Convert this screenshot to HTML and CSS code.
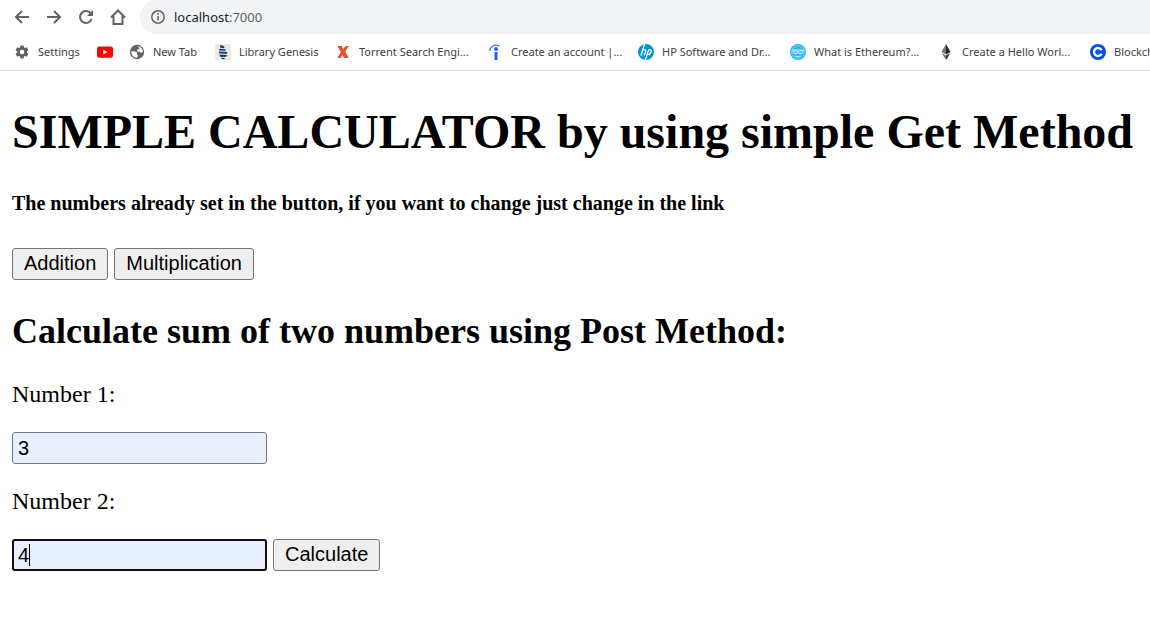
FILE: index.html
```html
<!DOCTYPE html>
<html lang="en">
<head>
<meta charset="utf-8">
<title>Simple Calculator</title>
<link rel="stylesheet" href="styles.css">
</head>
<body>
<header class="browser">
  <div class="toolbar">
    <button class="nav" type="button" aria-label="Back"><svg viewBox="0 0 16 16"><path d="M15 8H2M8 2L2 8l6 6" class="line"/></svg></button>
    <button class="nav" type="button" aria-label="Forward"><svg viewBox="0 0 16 16"><path d="M1 8h13M8 2l6 6-6 6" class="line"/></svg></button>
    <button class="nav" type="button" aria-label="Reload"><svg viewBox="0 0 16 16"><path d="M12.800 4.300A6 6 0 1 0 13.700 10" class="line"/><path d="M15 1v6H9z" fill="#5f6368"/></svg></button>
    <button class="nav" type="button" aria-label="Home"><svg viewBox="0 0 16 16"><path d="M1 8.500L8 1.500l7 7M3.500 7v8h9V7" class="line"/></svg></button>
    <div class="address">
      <svg class="info" viewBox="0 0 16 16"><circle cx="8" cy="8" r="6.200" class="line"/><path d="M8 7v4.500M8 4v1.800" class="line"/></svg>
      <span>localhost<span class="port">:7000</span></span>
    </div>
  </div>
  <nav class="bookmarks" aria-label="Bookmarks">
    <a class="mark" href="#"><svg viewBox="0 0 16 16"><g fill="#5f6368"><circle cx="8" cy="8" r="5"/><path d="M6.400 1.500h3.200l.5 3H5.900zM6.400 14.500h3.200l.5-3H5.900z"/><path d="M6.400 1.500h3.200l.5 3H5.900zM6.400 14.500h3.200l.5-3H5.900z" transform="rotate(60 8 8)"/><path d="M6.400 1.500h3.200l.5 3H5.900zM6.400 14.500h3.200l.5-3H5.900z" transform="rotate(120 8 8)"/></g><circle cx="8" cy="8" r="2.200" fill="#fff"/></svg><span class="label tiny">Settings</span></a>
    <a class="mark" href="#" aria-label="YouTube"><svg viewBox="0 0 16 16"><rect y="2.400" width="16" height="11.400" rx="2.500" fill="#f00"/><path d="M6.300 5.700v4.800l4.200-2.400z" fill="#fff"/></svg></a>
    <a class="mark" href="#"><svg viewBox="0 0 16 16"><circle cx="8" cy="8" r="7.200" fill="#5f6368"/><path d="M2.200 7.500c1.500-.3 3 0 4.300.2 1.500.3 1.800 1 1.500 1.800-.2.700.1 1.200 1 1.500l-.8 2.700C5 13.800 2 11.200 2.200 7.500zM8.500 2.200c3 .1 5.500 2.800 5.400 5.800-.7 1-1.700 1-2.500.4-.8-.7-1.700-.4-2.600-.7-1-.4-1.200-1.400-.5-2 .6-.5 1.700-.4 2-1.200.2-.7-.8-1.100-1.800-2.300z" fill="#fff"/></svg><span class="label tiny wide">New Tab</span></a>
    <a class="mark" href="#"><svg viewBox="0 0 16 16"><path fill="#ebebdf" d="M0 0h16v16H0z"/><path d="M5 1.500c2-.8 3.500 0 4.500 1.700L9 4.200 5.200 3.800zM4.500 4.800l6 .4.500 1.600-7-.4zM4 7.500l8.500.4-1 2L3.800 9.200zM4.500 10.600l6.500.4 1.700 1-3 1-4.700-.3zM6 13.800l4 .2-1 1.300H7z" fill="#173b83"/></svg><span class="label short">Library Genesis</span></a>
    <a class="mark" href="#"><svg viewBox="0 0 16 16"><path d="M2.300 2h4.200l1.900 3L10.400 2h3.300l-3.500 5.500L13.800 14H9.300L7.500 11 5.500 14H2.300L5.900 8z" fill="#e7512b"/></svg><span class="label">Torrent Search Engi...</span></a>
    <a class="mark" href="#"><svg viewBox="0 0 16 16"><path d="M2.700 7C3 2.700 7.500-.4 12.500 2.200" fill="none" stroke="#3977ef" stroke-width="1.300"/><circle cx="9" cy="4.900" r="2" fill="#215cec"/><path d="M7.500 8h3v8h-3z" fill="#215cec"/></svg><span class="label account">Create an account |...</span></a>
    <a class="mark" href="#"><svg viewBox="0 0 16 16"><circle cx="8" cy="8" r="8" fill="#0096d6"/><path d="M6.500 0L3 11.500M4.500 6c2.500-.3 3.800-.2 3.100 1.800L6.200 11.500M7.300 16L10.700 6M10.400 6c3-.3 3.300.2 2.500 2.400-.7 2-1.300 2.500-4 2.500" fill="none" stroke="#fff" stroke-width="1.300"/></svg><span class="label">HP Software and Dr...</span></a>
    <a class="mark" href="#"><svg viewBox="0 0 16 16"><circle cx="8" cy="8" r="8" fill="#29b6f6"/><circle cx="8" cy="8" r="6.300" fill="none" stroke="#87d8fb" stroke-width=".8"/><path d="M1.500 6h13M3 7h4.300v2.500H4zM8.700 7H13l-1 2.500H8.700zM5 12q3 1.300 6 0" fill="none" stroke="#c4ecfd"/></svg><span class="label mid">What is Ethereum?...</span></a>
    <a class="mark" href="#"><svg viewBox="0 0 16 16"><path d="M8 0L3.500 8 8 10.500z" fill="#777"/><path d="M8 0l4.500 8L8 10.500z" fill="#292929"/><path d="M3.500 9L8 11.500V16z" fill="#777"/><path d="M12.500 9L8 11.500V16z" fill="#333"/></svg><span class="label">Create a Hello Worl...</span></a>
    <a class="mark" href="#"><svg viewBox="0 0 16 16"><circle cx="8" cy="8" r="8" fill="#0052e0"/><path d="M11.600 6.300A4 4 0 1 0 11.600 9.700" fill="none" stroke="#fff" stroke-width="2.400"/></svg><span class="label">Blockchain</span></a>
  </nav>
</header>
<main class="page">
  <h1>SIMPLE CALCULATOR by using simple Get Method</h1>
  <h5>The numbers already set in the button, if you want to change just change in the link</h5>
  <div class="row">
    <button class="btn" type="button">Addition</button>
    <button class="btn" type="button">Multiplication</button>
  </div>
  <h2>Calculate sum of two numbers using Post Method:</h2>
  <form>
    <label for="n1">Number 1:</label>
    <div class="row"><input class="field" id="n1" type="text" value="3"></div>
    <label for="n2">Number 2:</label>
    <div class="row">
      <div class="entry"><input class="field active" id="n2" type="text" value="4"><span class="caret"></span></div>
      <button class="btn" type="submit">Calculate</button>
    </div>
  </form>
</main>
</body>
</html>
```
FILE: styles.css
```css
* { box-sizing: border-box; }
body {
  margin: 0;
  background: #fff;
  color: #000;
  font-family: "Liberation Serif", "Times New Roman", serif;
  font-size: 24px;
}
.browser {
  border-bottom: 1px solid #dadce0;
  font-family: "Noto Sans", "Open Sans", sans-serif;
  color: #3c4043;
  overflow: hidden;
}
.toolbar {
  display: flex;
  align-items: center;
  gap: 16px;
  height: 34px;
  padding-left: 14px;
}
.nav {
  width: 16px;
  height: 16px;
  padding: 0;
  border: 0;
  background: none;
}
svg { display: block; width: 16px; height: 16px; flex: none; }
.line { fill: none; stroke: #5f6368; stroke-width: 2; }
.address {
  flex: 1;
  align-self: stretch;
  display: flex;
  align-items: center;
  gap: 8px;
  margin-left: -2px;
  padding-left: 10px;
  border-radius: 17px 0 0 17px;
  background: #f1f3f4;
  color: #202124;
  font-size: 13px;
}
.info .line { stroke-width: 1.5; }
.port { color: #5f6368; }
.bookmarks {
  display: flex;
  align-items: center;
  gap: 16px;
  height: 36px;
  padding: 0 0 1px 14px;
}
.mark {
  display: flex;
  flex: none;
  align-items: center;
  gap: 8px;
  color: inherit;
  font-size: 11px;
  line-height: 15px;
  text-decoration: none;
}
.label { width: 112px; white-space: nowrap; }
.tiny { width: 43px; }
.wide { width: 46px; }
.short { width: 80px; }
.mid { width: 108px; }
.account { width: 111px; }
.page { padding: 0 12px; }
h1, h2, h5 { margin: 0; }
h1 { padding-top: 33px; font-size: 48px; line-height: 56px; }
h5 { padding: 32px 0 33px; font-size: 20px; line-height: 23px; }
h2 { padding: 30px 0 28px; font-size: 36px; line-height: 42px; }
.row { display: flex; gap: 6px; }
.btn, .field {
  height: 32px;
  border: 1px solid #767676;
  border-radius: 3px;
  font-family: "Liberation Sans", Arial, sans-serif;
  font-size: 20px;
  color: #000;
}
.btn { padding: 0 11px 2px; background: #efefef; }
.field { width: 255px; padding: 0 5px; background: #e8f0fe; }
label { display: block; line-height: 28px; }
form .row { padding: 24px 0 23px; }
.entry { position: relative; display: flex; }
.active { outline: 2px solid #101010; outline-offset: -2px; }
.caret {
  position: absolute;
  left: 17px;
  top: 5px;
  width: 1px;
  height: 22px;
  background: #000;
}
```
